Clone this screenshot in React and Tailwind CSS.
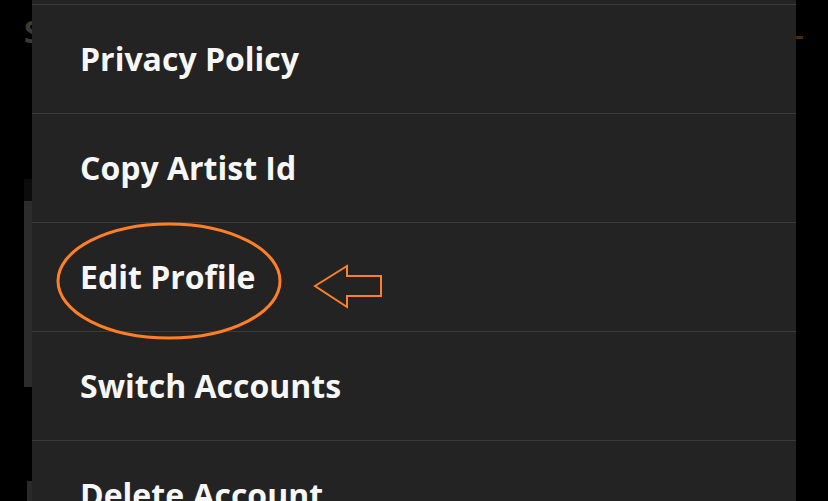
import React from "react";

const items = ["Privacy Policy", "Copy Artist Id", "Edit Profile", "Switch Accounts", "Delete Account"];

const App = () => {
  return (
    <div
      className="relative w-[828px] h-[501px] overflow-hidden bg-black"
      style={{ fontFamily: '"Open Sans", "Noto Sans", sans-serif' }}
    >
      {/* Página de fondo, tapada por el menú */}
      <div className="absolute inset-y-0 left-0 flex w-[32px] flex-col overflow-hidden pl-[24px]">
        <div className="mt-[14px] h-[36px] w-[8px] overflow-hidden whitespace-nowrap text-[30px] font-bold leading-[36px] text-[#3a3a3a]">
          S
        </div>
        <div className="mt-[130px] h-[22px] w-[8px] bg-[#0c0c0c]" />
        <div className="h-[189px] w-[8px] bg-[#2c2c2c]" />
        <div className="ml-[3px] mt-[94px] h-[20px] w-[5px] bg-[#2a2a2a]" />
      </div>
      <div className="absolute left-[796px] top-[36px] h-[3px] w-[7px] bg-[#4a2c05]" />

      {/* Menú */}
      <div className="absolute left-[32px] top-0 flex h-full w-[764px] flex-col bg-[#232323]">
        <div className="h-[4px] shrink-0" />
        {items.map((label) => (
          <div
            key={label}
            className="flex h-[109px] shrink-0 items-center border-t border-[#3a3a3a] pl-[48px] text-[32px] font-bold text-[#f7f7f7]"
          >
            {label}
          </div>
        ))}
      </div>

      {/* Anotación */}
      <svg className="absolute left-0 top-0" width="828" height="501" viewBox="0 0 828 501" fill="none">
        <ellipse cx="169" cy="281" rx="111" ry="57" stroke="#ff7f27" strokeWidth="3" />
        <path
          d="M315 286 L347 266 L347 276 L381 276 L381 296 L347 296 L347 307 Z"
          stroke="#ff7f27"
          strokeWidth="2"
          strokeLinejoin="miter"
        />
      </svg>
    </div>
  );
};

export default App;
